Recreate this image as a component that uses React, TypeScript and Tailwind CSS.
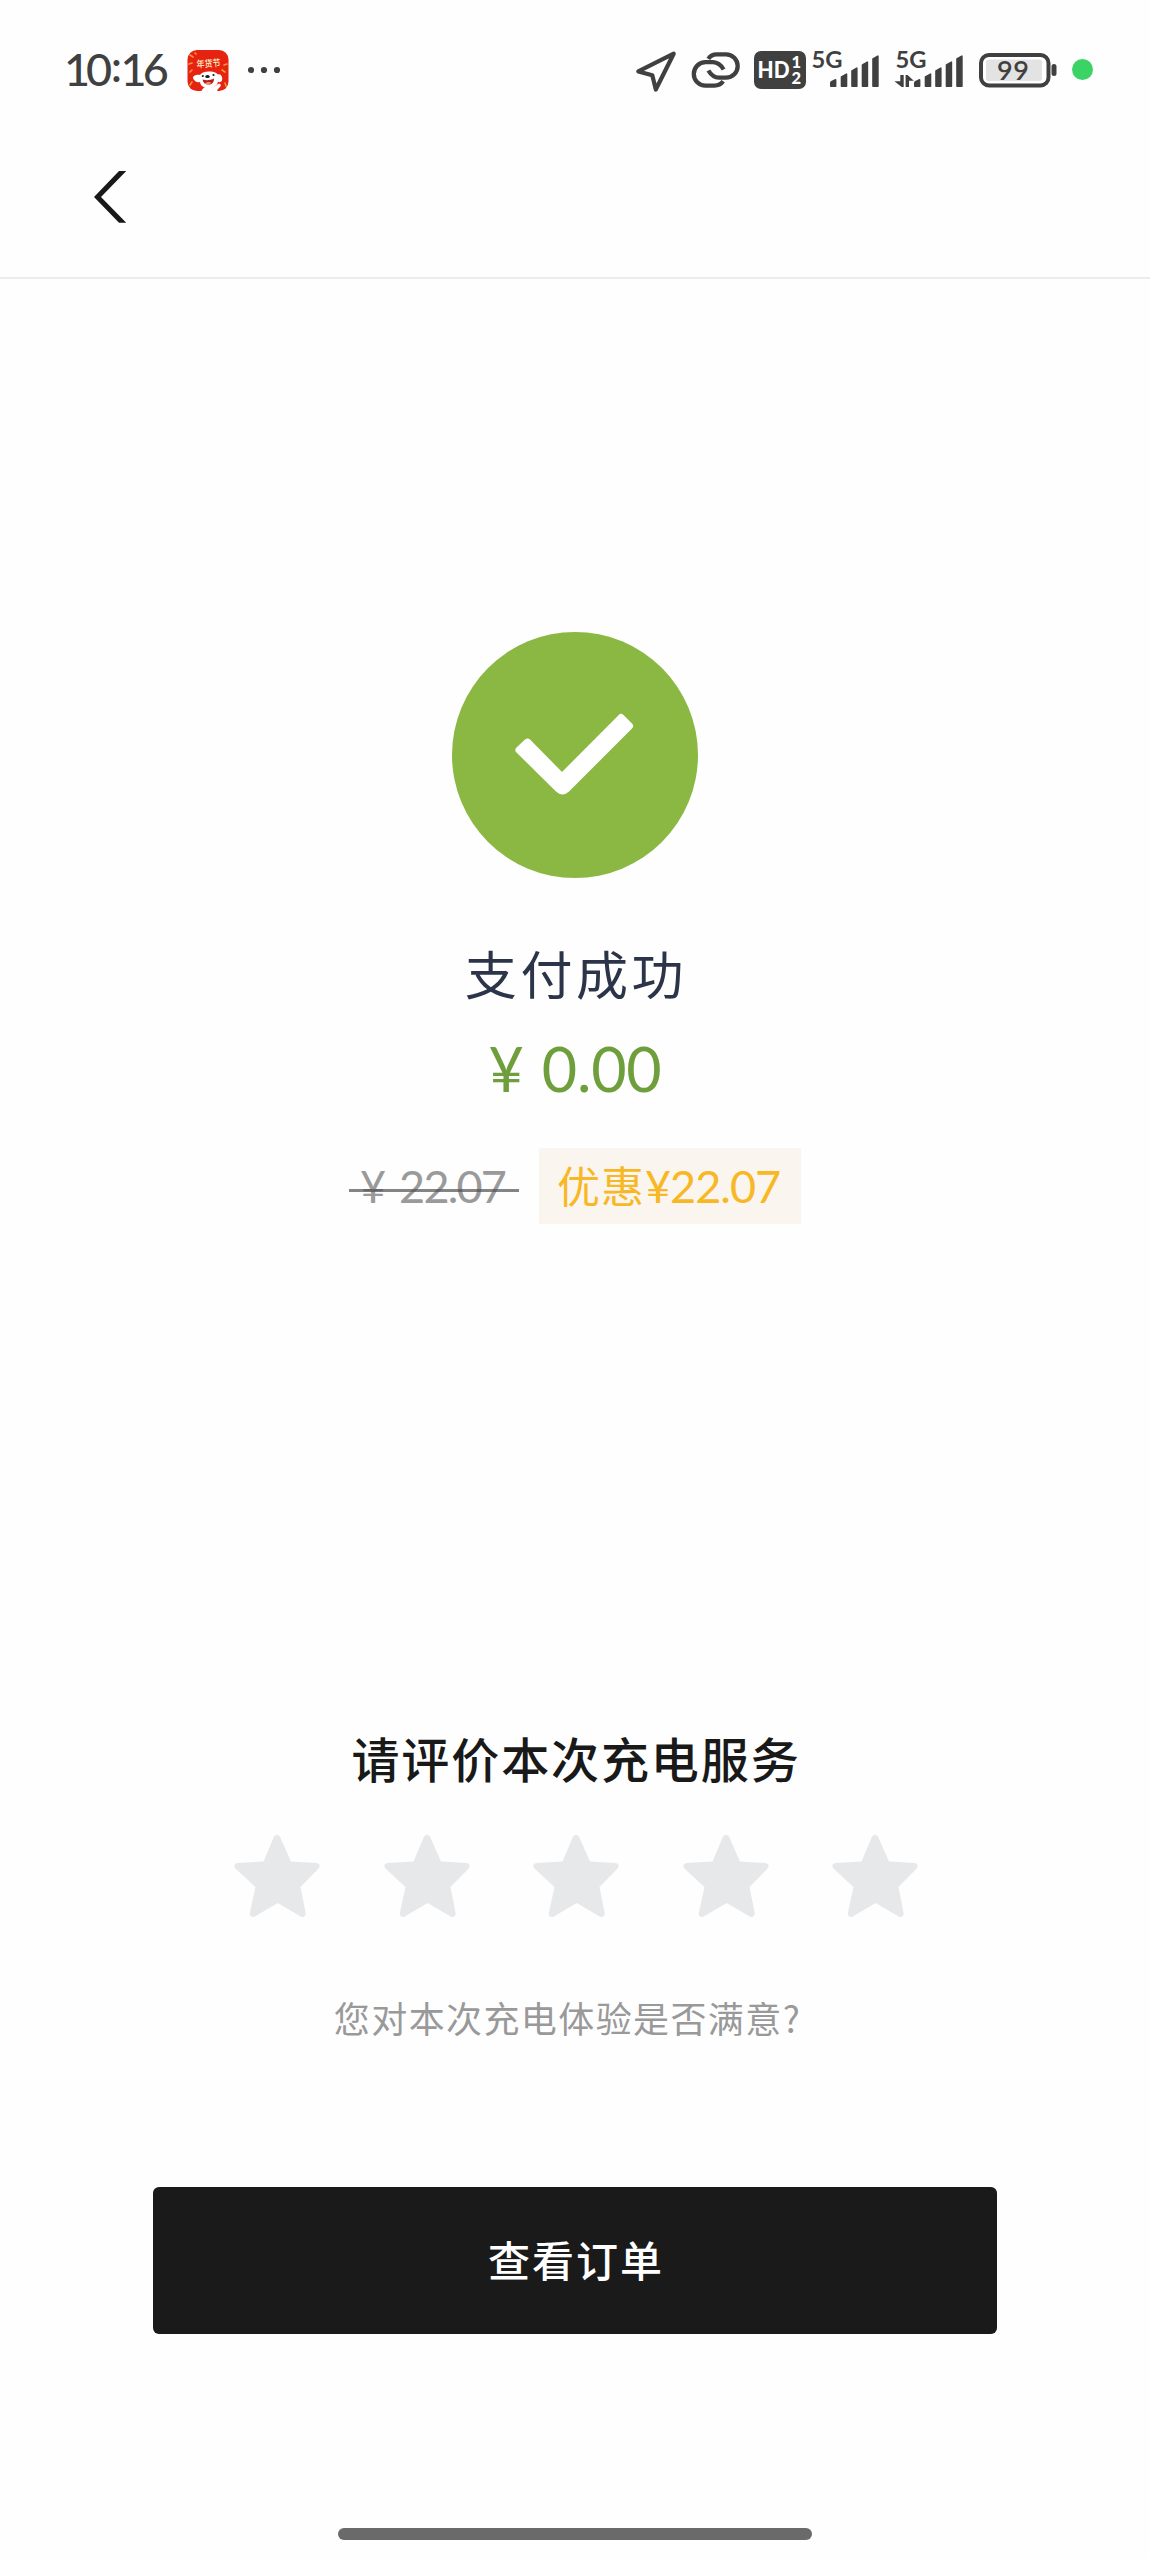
import React from "react";

const INK = "#404040";

function AppBadge() {
  return (
    <svg width="42" height="42" viewBox="0 0 42 42" className="block">
      <defs>
        <clipPath id="tile">
          <rect x="0.5" y="0" width="41" height="41" rx="9.5" />
        </clipPath>
      </defs>
      <g clipPath="url(#tile)">
        <rect width="42" height="42" fill="#e62310" />
        <g stroke="#f59a3c" strokeWidth="1.6" strokeLinecap="round">
          <path d="M3 5l3 2M2 14l3-1M5 20l-2 2M37 15l3-1M35 20l3 2M3 35l2-3M38 33l1 3M8 3l1 1" />
        </g>
        <text x="21.5" y="17" textAnchor="middle" fontSize="9.500" fontWeight="500" fill="#fff0c8" fontFamily="'Noto Sans CJK SC', sans-serif" transform="rotate(-4 21 14)" textLength="24" lengthAdjust="spacingAndGlyphs">年货节</text>
        <path d="M13 25c2-3 6-3.500 9-3.500s7 .5 9 3c3-1 5 3 4 6-1 2-3 2-4 1-1 5-5 6.500-9.500 6.500S13.500 36 13 32c-3 1-6-1-7-4-.5-2 4-4 7-3z" fill="#fff" />
        <path d="M14 42c2-5 5-6 9-5s5-1 8-3c2-1 4 1 2 3-2 1.500-3 3-3 5z" fill="#fff" />
        <ellipse cx="20.500" cy="26.500" rx="2.300" ry="1.500" fill="#201818" />
        <circle cx="15.800" cy="26" r="1.100" fill="#201818" />
        <circle cx="26.500" cy="25" r="1.100" fill="#201818" />
        <path d="M15.500 29.500c4 1.200 8 .8 11.500-1 0 4-2 6-5.500 6S16 32.500 15.500 29.500z" fill="#b42018" />
        <path d="M18 33.200c2-1.500 5-1.500 6.500-.6-1.500 2-5 2.400-6.500.6z" fill="#f58a80" />
      </g>
    </svg>
  );
}

function Bars() {
  return (
    <g fill={INK} stroke={INK} strokeWidth="1.600" strokeLinejoin="round">
      <path d="M18.800 36.200v-3.200q0-.8.8-1.200l4-2v6.400z" />
      <path d="M29.500 36.200V27l5-2.800v12z" />
      <path d="M40 36.200V21l4.800-2.800v18z" />
      <path d="M50.500 36.200V15l4.900-2.800v24z" />
      <path d="M61 36.200V9l4.900-2.800v30z" />
    </g>
  );
}

function Signal({ traffic = false }: { traffic?: boolean }) {
  return (
    <svg width="68" height="40" viewBox="0 0 68 40" className="block overflow-visible">
      <text x="-0.500" y="17.700" fontSize="23.500" fontWeight="700" fill={INK} fontFamily="Lato, sans-serif" textLength="31" lengthAdjust="spacingAndGlyphs">5G</text>
      <Bars />
      {traffic && (
        <g fill={INK}>
          <path d="M4.300 25h3.400v12h-2L-1.600 31.200h5.900z" />
          <path d="M9.600 37V25h2l6.200 5.800H13V37z" />
        </g>
      )}
    </svg>
  );
}

function StatusBar() {
  return (
    <div className="flex h-[140px] items-start pt-[50px]">
      <div className="ml-[64px] h-[42px] w-[123px] font-[Lato] text-[45px] leading-[38px] font-medium tracking-[-4px] whitespace-nowrap text-[#404040]">
        10<span className="relative top-[-4px] mx-[2.500px]">:</span>16
      </div>
      <AppBadge />
      <svg width="34" height="42" viewBox="0 0 34 42" className="ml-[19px]" fill={INK}>
        <circle cx="3" cy="20" r="3.100" />
        <circle cx="16" cy="20" r="3.100" />
        <circle cx="29" cy="20" r="3.100" />
      </svg>
      <svg width="42" height="44" viewBox="0 0 42 44" className="ml-[353px]" fill="none" stroke={INK} strokeWidth="4.200" strokeLinejoin="round">
        <path d="M38.700 3.700L3.300 21.400l14 3.900 3.500 14.200z" />
      </svg>
      <svg width="50" height="42" viewBox="0 0 50 42" className="ml-[14px]" fill="none" stroke={INK} strokeWidth="4.300">
        <path d="M17.300 8.800Q20.200 4.300 25.600 4.300H35a11.700 11.700 0 0 1 0 23.400H28Q21.500 27.500 17.400 20.500" />
        <path d="M32.200 31.300Q29 35.600 23.500 35.600H14.500a11.700 11.700 0 0 1 0-23.400H22Q28.500 12.500 32.600 19.500" />
      </svg>
      <svg width="52" height="40" viewBox="0 0 52 40" className="ml-[13px]">
        <rect y="1" width="52" height="38" rx="7" fill={INK} />
        <g fill="#fff" fontFamily="Lato, sans-serif" fontWeight="900">
          <text x="3.500" y="28" fontSize="23" textLength="32" lengthAdjust="spacingAndGlyphs">HD</text>
          <text x="37.500" y="17.800" fontSize="16.500">1</text>
          <text x="37.500" y="34" fontSize="16.500">2</text>
        </g>
      </svg>
      <div className="ml-[6px] w-[84px]">
        <Signal />
      </div>
      <div className="w-[83px]">
        <Signal traffic />
      </div>
      <svg width="80" height="40" viewBox="0 0 80 40" className="block">
        <rect x="2" y="5" width="67.500" height="30.500" rx="8" fill="#fff" stroke={INK} strokeWidth="4" />
        <rect x="7" y="9.500" width="56" height="21.500" rx="3" fill="#e3e3e3" />
        <rect x="72.500" y="14" width="5" height="12" rx="2.500" fill={INK} />
        <text x="18" y="29.500" fontSize="27" fontWeight="600" fill={INK} fontFamily="Lato, sans-serif" textLength="32">99</text>
      </svg>
      <div className="mt-[9px] ml-[13px] size-[21px] rounded-full bg-[#3bd366]" />
    </div>
  );
}

function Star() {
  return (
    <svg width="86" height="84" viewBox="0 0 86 84" className="block">
      <path
        d="M40.200 2.300Q43 -1 45.800 2.300L57 27.500 83 29Q87.500 30.500 84.600 34.500L66.500 53 71.700 79Q71.500 83.500 67.500 83L43.700 69 20 83Q15.500 83.500 15.800 79L21.500 53 1.400 34.500Q-1.500 30.500 3 29L29.500 27.500z"
        fill="#e6e8ea"
      />
    </svg>
  );
}

export default function App() {
  return (
    <div className="flex h-[2559px] w-[1150px] flex-col overflow-hidden bg-[#fefefe] font-['Noto_Sans_CJK_SC',sans-serif]">
      <StatusBar />
      <header className="h-[139px] border-b-2 border-[#ececec] pt-[31px] pl-[94px]">
        <svg width="32" height="52" viewBox="0 0 32 52" fill="#191919">
          <path d="M25 0h7.300L7 26l25.300 25.700H25L0 26z" />
        </svg>
      </header>

      <main className="flex flex-col items-center">
        <svg width="246" height="246" viewBox="0 0 246 246" className="mt-[353px]">
          <circle cx="123" cy="123" r="123" fill="#8bb843" />
          <path
            d="M64.500 120.500Q62 118 64.500 115.500L73 107.500Q75.500 105.300 78 107.500L110 140 166.500 83.200Q169 80.500 171.500 83L180 91.500Q182.500 94 180 96.500L117 159.500Q110.500 165.500 104 159.500z"
            fill="#fff"
          />
        </svg>
        <h1 className="mt-[56px] h-[78px] pl-[2px] text-[52px] leading-[78px] font-normal tracking-[3.6px] text-[#2b3448]">支付成功</h1>
        <div className="mt-[17px] flex h-[80px] items-center font-[Lato] text-[61px] leading-[80px] text-[#6f9f3c]">
          <span className="mr-[18px]">¥</span>
          <span className="tracking-[-0.2px]">0.00</span>
        </div>
        <div className="mt-[39px] flex h-[76px] items-center">
          <div className="relative flex h-[76px] w-[170px] items-center pl-[11px] font-[Lato] text-[45px] leading-[76px] text-[#9a9a9a]">
            <span className="mr-[13px]">¥</span>
            <span className="tracking-[-1.8px]">22.07</span>
            <span className="absolute top-[41px] left-0 h-[3px] w-[170px] bg-[#505050]/70" />
          </div>
          <div className="ml-[20px] flex h-[76px] w-[262px] items-center bg-[#fbf5ef] pl-[18px] text-[#f8b826]">
            <span className="relative top-[-2px] text-[43px] leading-[76px] tracking-[1px]">优惠</span>
            <span className="font-[Lato] text-[45px] leading-[76px] tracking-[-1px]">¥22.07</span>
          </div>
        </div>

        <h2 className="mt-[498px] h-[70px] pl-[2px] text-[48px] leading-[70px] font-medium tracking-[1.9px] text-[#191919]">请评价本次充电服务</h2>
        <div className="mt-[42px] flex gap-[63.500px] pl-[2px]">
          {[1, 2, 3, 4, 5].map((n) => (
            <Star key={n} />
          ))}
        </div>
        <p className="mt-[72px] mr-[15px] h-[54px] text-[36px] leading-[54px] tracking-[1.4px] text-[#999999]">您对本次充电体验是否满意?</p>
        <button className="mt-[143px] h-[147px] w-[844px] rounded-[6px] bg-[#1a1a1a] pb-[4px] pl-[2px] text-[42px] font-medium tracking-[2px] text-white">查看订单</button>
        <div className="mt-[194px] h-[12px] w-[474px] rounded-full bg-[#6a6a6a]" />
      </main>
    </div>
  );
}
